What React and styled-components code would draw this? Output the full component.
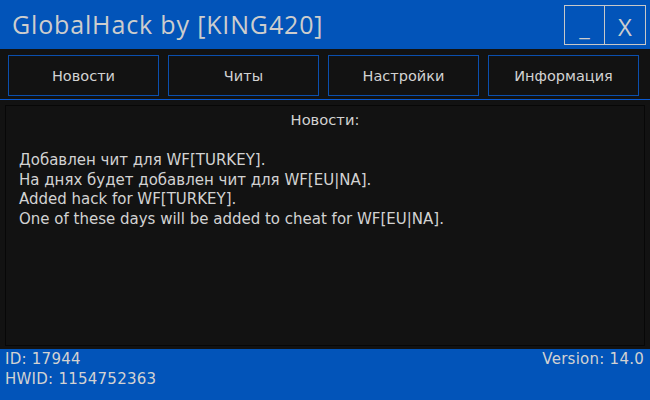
import styled, { createGlobalStyle } from "styled-components";

const GlobalStyle = createGlobalStyle`
  html, body {
    margin: 0;
    padding: 0;
    background: #121212;
  }
`;

const NAV = ["Новости", "Читы", "Настройки", "Информация"];

const NEWS = [
  "Добавлен чит для WF[TURKEY].",
  "На днях будет добавлен чит для WF[EU|NA].",
  "Added hack for WF[TURKEY].",
  "One of these days will be added to cheat for WF[EU|NA].",
];

const App = () => {
  return (
    <Window>
      <GlobalStyle />
      <TitleBar>
        <Title>GlobalHack by [KING420]</Title>
        <WinButtons>
          <WinButton>_</WinButton>
          <WinButton>X</WinButton>
        </WinButtons>
      </TitleBar>
      <Nav>
        {NAV.map((item) => (
          <NavButton key={item}>{item}</NavButton>
        ))}
      </Nav>
      <Panel>
        <PanelTitle>Новости:</PanelTitle>
        <NewsList>
          {NEWS.map((line) => (
            <p key={line}>{line}</p>
          ))}
        </NewsList>
      </Panel>
      <Footer>
        <FooterCol>
          <span>ID: 17944</span>
          <span>HWID: 1154752363</span>
        </FooterCol>
        <span>Version: 14.0</span>
      </Footer>
    </Window>
  );
};

export default App;

const Window = styled.div`
  width: 650px;
  height: 400px;
  display: flex;
  flex-direction: column;
  background: #121212;
  color: #d2d2d2;
  font-family: "DejaVu Sans", Tahoma, sans-serif;
  overflow: hidden;
`;

const TitleBar = styled.div`
  height: 49px;
  flex: none;
  display: flex;
  justify-content: space-between;
  background: #0254b9;
`;

const Title = styled.h1`
  margin: 0;
  padding: 0 0 0 12px;
  line-height: 48px;
  font-family: "Open Sans", "Noto Sans", sans-serif;
  font-weight: 400;
  font-size: 25px;
  letter-spacing: 0.85px;
  color: #cdcdcd;
`;

const WinButtons = styled.div`
  display: flex;
  margin: 5px 4px 0 0;
  height: 40px;
`;

const WinButton = styled.button`
  width: 41px;
  height: 40px;
  padding: 2px 0 0;
  background: transparent;
  border: 1px solid #c8c8c8;
  color: #cdcdcd;
  font-family: "Open Sans", "Noto Sans", sans-serif;
  font-size: 24px;
  & + & {
    border-left: none;
  }
`;

const Nav = styled.div`
  flex: none;
  display: grid;
  grid-template-columns: repeat(4, 1fr);
  gap: 9px;
  padding: 6px 11px 3px 8px;
  border-bottom: 1px solid #0a5ad2;
`;

const NavButton = styled.button`
  height: 41px;
  background: #121212;
  border: 1px solid #0b4fae;
  color: #d2d2d2;
  font-family: "DejaVu Sans", Tahoma, sans-serif;
  font-size: 14.5px;
`;

const Panel = styled.div`
  flex: 1;
  margin: 5px 5px 3px 5px;
  border: 1px solid #070707;
  padding: 0 13px;
`;

const PanelTitle = styled.div`
  text-align: center;
  font-size: 14.7px;
  margin-top: 5px;
`;

const NewsList = styled.div`
  margin-top: 23px;
  font-size: 15px;
  p {
    margin: 0;
    line-height: 19.6px;
  }
`;

const Footer = styled.div`
  height: 51px;
  flex: none;
  display: flex;
  justify-content: space-between;
  align-items: flex-start;
  padding: 0 6px 0 5px;
  box-sizing: border-box;
  background: #0254b9;
  font-size: 15px;
  letter-spacing: 0.25px;
  line-height: 20px;
`;

const FooterCol = styled.div`
  display: flex;
  flex-direction: column;
`;
